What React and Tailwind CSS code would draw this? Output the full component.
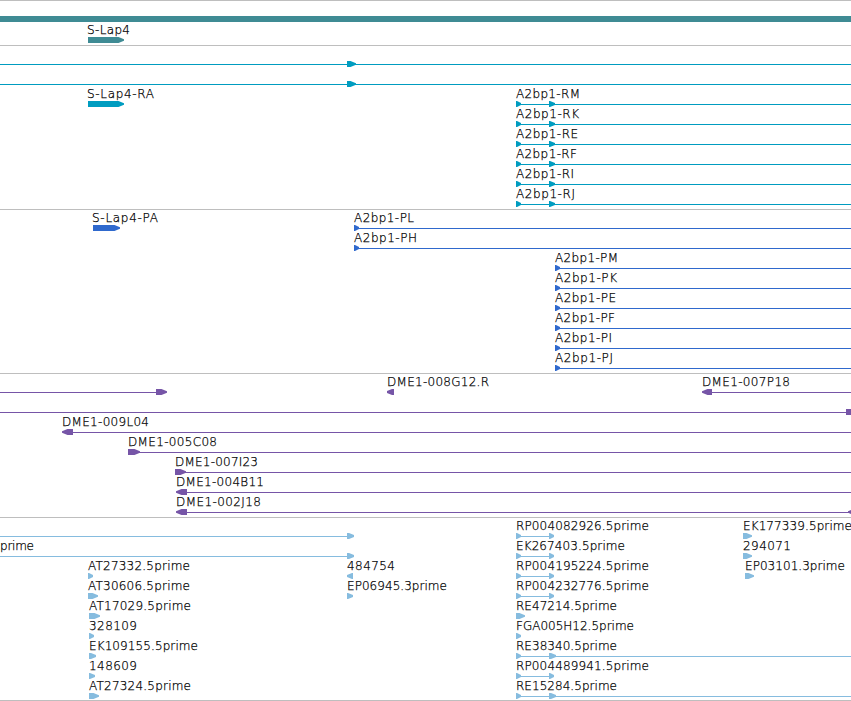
const COLORS = {
  gene: '#3f8b94',
  transcript: '#009cc0',
  protein: '#2f69cd',
  clone: '#7655a7',
  est: '#86bcdf',
};

// Feature: label, label x, label width, line [from, to], boxes [x, width, direction]
const f = (label, x, width, line, boxes) => ({ label, x, width, line, boxes });

const A = [
  [f('', 0, 0, [0, 851], [[347, 9, 'r']])],
  [f('', 0, 0, [0, 851], [[347, 9, 'r']])],
  [f('S-Lap4-RA', 87, 67, null, [[88, 36, 'r']]), f('A2bp1-RM', 516, 64, [516, 851], [[516, 5, 'r'], [549, 6, 'r']])],
  [f('A2bp1-RK', 516, 63, [516, 851], [[516, 5, 'r'], [549, 6, 'r']])],
  [f('A2bp1-RE', 516, 62, [516, 851], [[516, 5, 'r'], [549, 6, 'r']])],
  [f('A2bp1-RF', 516, 61, [516, 851], [[516, 5, 'r'], [549, 6, 'r']])],
  [f('A2bp1-RI', 516, 58, [516, 851], [[516, 5, 'r'], [549, 6, 'r']])],
  [f('A2bp1-RJ', 516, 59, [516, 851], [[516, 5, 'r'], [549, 6, 'r']])],
];

const P = [
  [f('S-Lap4-PA', 92, 66, null, [[93, 27, 'r']]), f('A2bp1-PL', 354, 60, [354, 851], [[354, 5, 'r']])],
  [f('A2bp1-PH', 354, 63, [354, 851], [[354, 5, 'r']])],
  [f('A2bp1-PM', 555, 63, [555, 851], [[555, 5, 'r']])],
  [f('A2bp1-PK', 555, 62, [555, 851], [[555, 5, 'r']])],
  [f('A2bp1-PE', 555, 61, [555, 851], [[555, 5, 'r']])],
  [f('A2bp1-PF', 555, 60, [555, 851], [[555, 5, 'r']])],
  [f('A2bp1-PI', 555, 57, [555, 851], [[555, 5, 'r']])],
  [f('A2bp1-PJ', 555, 58, [555, 851], [[555, 5, 'r']])],
];

const D = [
  [
    f('', 0, 0, [0, 160], [[156, 11, 'r']]),
    f('DME1-008G12.R', 387, 102, null, [[387, 7, 'l']]),
    f('DME1-007P18', 702, 88, [706, 851], [[702, 10, 'l']]),
  ],
  [f('', 0, 0, [0, 851], [[846, 11, 'r']])],
  [f('DME1-009L04', 62, 87, [66, 851], [[62, 11, 'l']])],
  [f('DME1-005C08', 128, 89, [128, 851], [[128, 12, 'r']])],
  [f('DME1-007I23', 175, 83, [175, 851], [[175, 11, 'r']])],
  [f('DME1-004B11', 176, 88, [180, 851], [[176, 11, 'l']])],
  [f('DME1-002J18', 176, 85, [180, 851], [[176, 11, 'l'], [848, 11, 'l']])],
];

const pair = [[516, 5, 'r'], [549, 5, 'r']];

const E = [
  [
    f('', 0, 0, [0, 350], [[347, 7, 'r']]),
    f('RP004082926.5prime', 516, 133, [516, 551], pair),
    f('EK177339.5prime', 743, 109, null, [[743, 9, 'r']]),
  ],
  [
    f('prime', 0, 34, [0, 350], [[347, 7, 'r']]),
    f('EK267403.5prime', 516, 109, [516, 551], pair),
    f('294071', 743, 48, null, [[743, 9, 'r']]),
  ],
  [
    f('AT27332.5prime', 88, 102, null, [[88, 5, 'r']]),
    f('484754', 347, 48, null, [[347, 6, 'l']]),
    f('RP004195224.5prime', 516, 133, [516, 551], pair),
    f('EP03101.3prime', 745, 100, null, [[745, 9, 'r']]),
  ],
  [
    f('AT30606.5prime', 88, 102, null, [[88, 10, 'r']]),
    f('EP06945.3prime', 347, 100, null, [[347, 6, 'r']]),
    f('RP004232776.5prime', 516, 133, [516, 551], pair),
  ],
  [f('AT17029.5prime', 89, 102, null, [[89, 11, 'r']]), f('RE47214.5prime', 516, 101, null, [[516, 9, 'r']])],
  [f('328109', 89, 48, null, [[89, 5, 'r']]), f('FGA005H12.5prime', 516, 118, null, [[516, 5, 'r']])],
  [f('EK109155.5prime', 89, 109, null, [[89, 7, 'r']]), f('RE38340.5prime', 516, 101, [516, 851], [[516, 5, 'r'], [549, 7, 'r']])],
  [f('148609', 89, 48, null, [[89, 6, 'r']]), f('RP004489941.5prime', 516, 133, [516, 551], pair)],
  [f('AT27324.5prime', 89, 102, null, [[89, 10, 'r']]), f('RE15284.5prime', 516, 101, [516, 851], [[516, 5, 'r'], [549, 7, 'r']])],
];

// Block arrow: long ones have a bevelled head, short ones are blunt triangles
function glyph([x, w, dir]) {
  const s = dir === 'r' ? 1 : -1;
  const tail = dir === 'r' ? x : x + w;
  const tip = dir === 'r' ? x + w : x;
  if (w < 9) {
    const body = tail + s * Math.max(1, w - 5);
    return `M${tail} 15H${body}L${tip} 17V19L${body} 21H${tail}Z`;
  }
  return `M${tail} 15H${tip - s * 5.5}L${tip} 17.2V18.8L${tip - s * 5.5} 21H${tail}Z`;
}

function Row({ features, color }) {
  return (
    <svg width="851" height="20" className="block overflow-visible">
      {features.map((t, i) => (
        <g key={i}>
          {t.line && <path d={`M${t.line[0]} 18.5H${t.line[1]}`} stroke={color} strokeWidth="1" fill="none" />}
          {t.boxes.map((b, j) => (
            <path key={j} d={glyph(b)} fill={color} />
          ))}
          {t.label && (
            <text
              x={t.x}
              y="12"
              textLength={t.width}
              className="fill-black stroke-black stroke-[0.25px] text-[12px] font-extralight font-['DejaVu_Sans',sans-serif]"
            >
              {t.label}
            </text>
          )}
        </g>
      ))}
    </svg>
  );
}

function Track({ rows, color, className }) {
  return (
    <section className={className}>
      {rows.map((r, i) => (
        <Row key={i} features={r} color={color} />
      ))}
    </section>
  );
}

export default function App() {
  return (
    <main className="h-[701px] w-[851px] overflow-hidden border-t border-[#bebebe] bg-white">
      <section className="border-b border-[#bebebe] pt-[15px] pb-[3px]">
        <div className="h-1.5 bg-[#3f8b94]" />
        <Row features={[f('S-Lap4', 87, 43, null, [[88, 36, 'r']])]} color={COLORS.gene} />
      </section>
      <Track rows={A} color={COLORS.transcript} className="border-b border-[#bebebe] pb-[3px]" />
      <Track rows={P} color={COLORS.protein} className="border-b border-[#bebebe] pb-[3px]" />
      <Track rows={D} color={COLORS.clone} className="border-b border-[#bebebe] pb-[3px]" />
      <Track rows={E} color={COLORS.est} className="border-b border-[#bebebe] pb-[2px]" />
    </main>
  );
}
